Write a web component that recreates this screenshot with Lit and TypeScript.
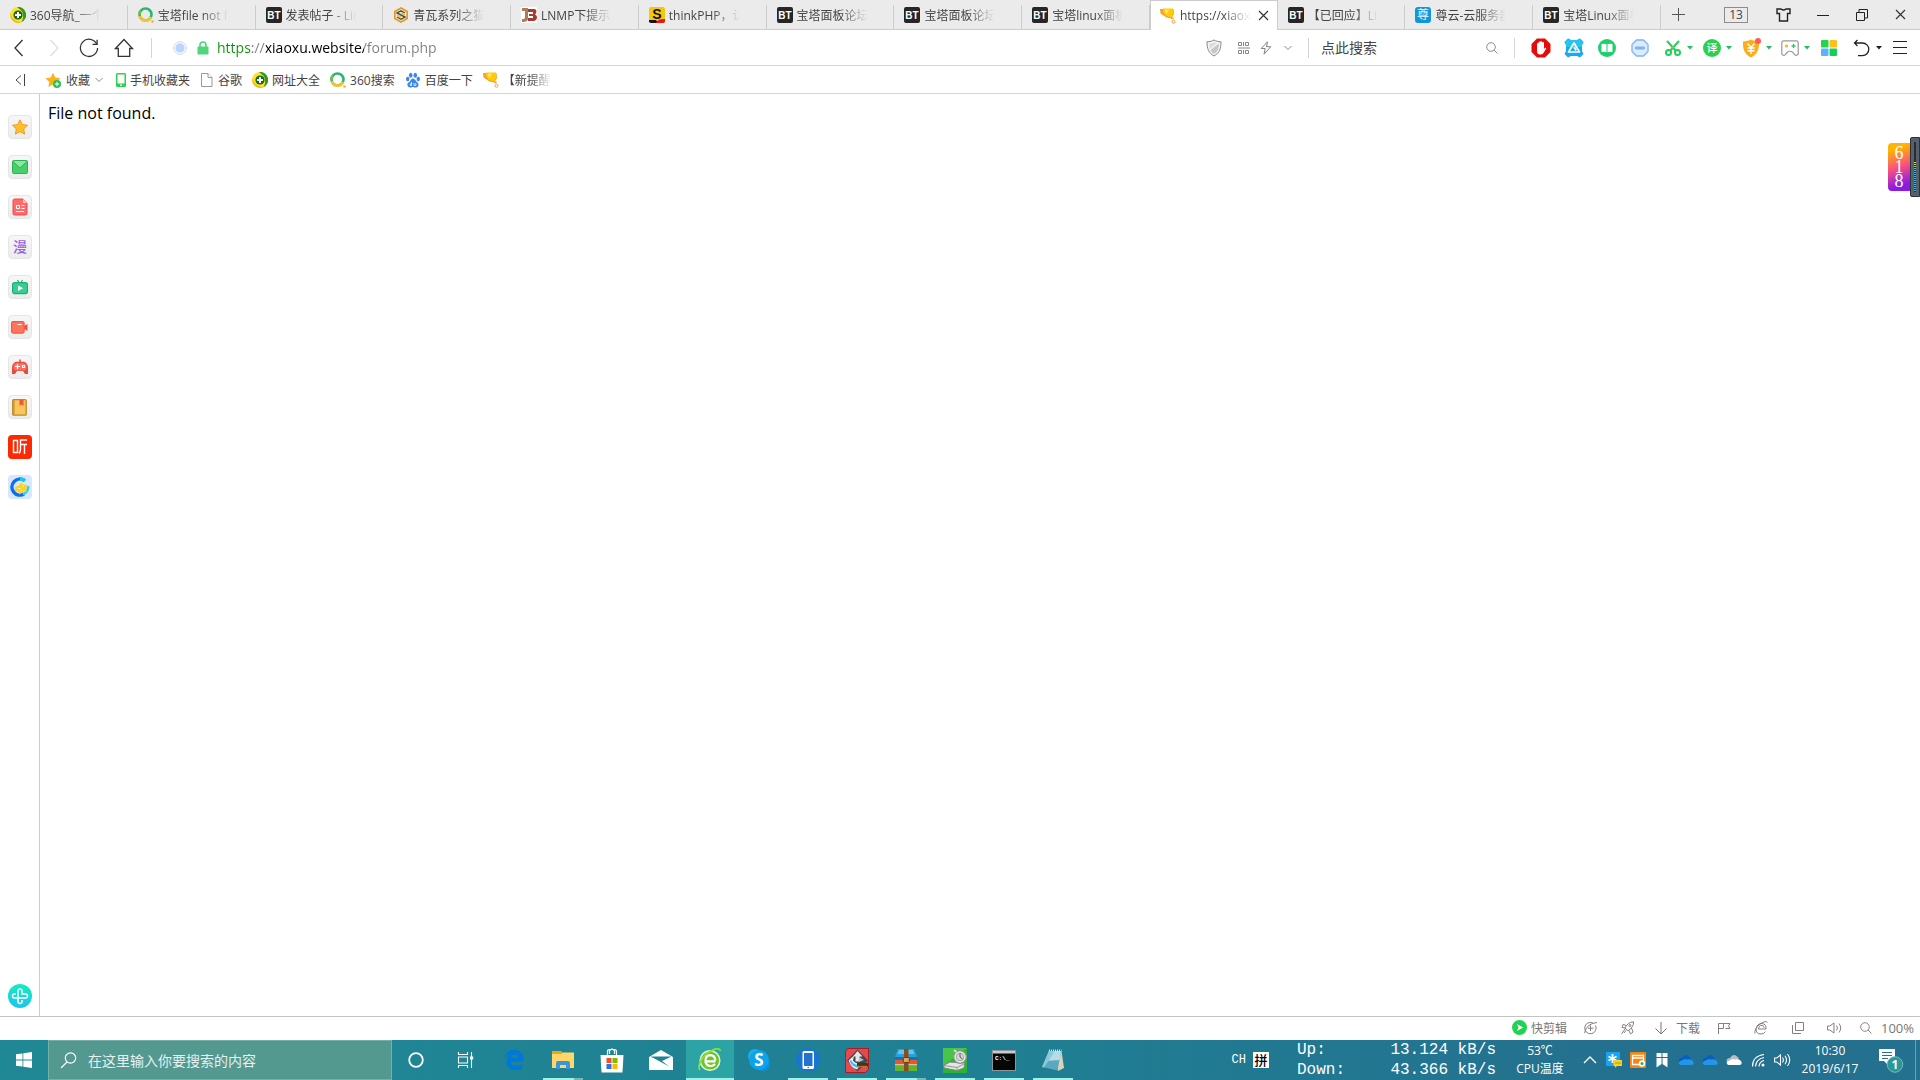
import { LitElement, html, css, TemplateResult } from "lit";
import { customElement } from "lit/decorators.js";
import { classMap } from "lit/directives/class-map.js";

type Icon = TemplateResult;

interface Item {
  label: string;
  icon: Icon;
  extra?: string;
}

/* ---------- site icons ---------- */

const nav360 = html`<svg width="16" height="16" viewBox="0 0 16 16">
  <circle cx="8" cy="8" r="8" fill="#ffe02e" />
  <path d="M7 0a8 8 0 0 1 4 15.400C14 12 14 5 10 2.500 9 1.500 8 .8 7 0z" fill="#2c9a2c" />
  <path d="M.5 6C1 11 5 14 11 15.400A8 8 0 0 1 .5 6z" fill="#f0b81c" />
  <circle cx="8" cy="8" r="4.600" fill="#146b18" />
  <path d="M8 5v6M5 8h6" stroke="#fff" stroke-width="2" />
</svg>`;

const search360 = html`<svg width="16" height="16" viewBox="0 0 16 16" fill="none">
  <circle cx="7.500" cy="7.500" r="6" stroke="#2bb673" stroke-width="2.600" />
  <path d="M1.700 9.200A6 6 0 0 0 13 10" stroke="#f7c52b" stroke-width="2.600" />
  <path d="M1.500 7.500A6 6 0 0 1 3 3.500" stroke="#6fc043" stroke-width="2.600" />
  <circle cx="14.500" cy="14.500" r="1.300" fill="#f7b32b" />
</svg>`;

const bt = html`<svg width="16" height="16" viewBox="0 0 16 16">
  <rect width="16" height="16" rx="2" fill="#262626" />
  <text x="8" y="12" text-anchor="middle" font-size="10" font-weight="700" fill="#fff" font-family="Liberation Sans, sans-serif">BT</text>
</svg>`;

const hexCoin = html`<svg width="16" height="16" viewBox="0 0 16 16" fill="none">
  <path d="M8 1l6.200 3.500v7L8 15l-6.200-3.500v-7z" stroke="#e8951c" stroke-width="1.600" />
  <path d="M12 6L8 3.800 4 6l8 4-4 2.300L4 10" stroke="#4f4c34" stroke-width="1.400" />
  <path d="M4 8l4 2M8 6l4 2" stroke="#e8b41c" stroke-width="1.200" />
</svg>`;

const jb = html`<svg width="16" height="16" viewBox="0 0 16 16">
  <rect width="16" height="16" fill="#fff" />
  <path d="M1 1h6v10c0 3-2 4-6 4v-3c2 0 3 0 3-2V4H1z" fill="#b07a60" />
  <path d="M7 2h6c3 0 3 4 1 5.500 3 1 2.500 6.500-1 6.500H7v-3h5V9H8V7h4V5H7z" fill="#a33b2f" />
</svg>`;

const thinkS = html`<svg width="16" height="16" viewBox="0 0 16 16">
  <rect width="16" height="16" rx="2" fill="#f8c70c" />
  <path d="M0 13h7l2 3H2a2 2 0 0 1-2-2z" fill="#111" />
  <path d="M7 16c2-4 5-4 9-4v2a2 2 0 0 1-2 2z" fill="#e3181b" />
  <text x="8" y="12" text-anchor="middle" font-size="14" font-weight="700" fill="#111" font-family="Liberation Sans, sans-serif">S</text>
</svg>`;

const trophy = html`<svg width="16" height="16" viewBox="0 0 16 16">
  <path d="M0 1h13.500l.5 5-2.500 4.500-5-1L.5 5.500z" fill="#f2a12c" />
  <path d="M3 .5h10l.3 5.500-2.300 3.500L6 8 3 4z" fill="#ffcb05" />
  <path d="M5 1.500h4L7 6 5 4z" fill="#ffe36a" />
  <path d="M10.500 10.500l3-1.500v2.500z" fill="#f2a12c" />
  <circle cx="13.500" cy="13.800" r="1.500" fill="#fff" stroke="#f0a040" />
</svg>`;

const zun = html`<svg width="16" height="16" viewBox="0 0 16 16">
  <rect width="16" height="16" rx="3" fill="#1296db" />
  <text x="8" y="12" text-anchor="middle" font-size="12" fill="#e8f6ff" font-family="Noto Sans CJK SC, sans-serif">尊</text>
</svg>`;

const TABS: Item[] = [
  { label: "360导航_一个", icon: nav360 },
  { label: "宝塔file not f", icon: search360 },
  { label: "发表帖子 - Lin", icon: bt },
  { label: "青瓦系列之猫", icon: hexCoin },
  { label: "LNMP下提示", icon: jb },
  { label: "thinkPHP，访", icon: thinkS },
  { label: "宝塔面板论坛", icon: bt },
  { label: "宝塔面板论坛", icon: bt },
  { label: "宝塔linux面板", icon: bt },
  { label: "https://xiaox", icon: trophy, extra: "active" },
  { label: "【已回应】Lin", icon: bt },
  { label: "尊云-云服务器", icon: zun },
  { label: "宝塔Linux面板", icon: bt },
];

/* ---------- small shared glyphs ---------- */

const cross = html`<svg width="11" height="11" viewBox="0 0 11 11"><path d="M1 1l9 9M10 1l-9 9" stroke="#333" stroke-width="1.200" /></svg>`;
const chevron = html`<svg width="8" height="6" viewBox="0 0 8 6" fill="none"><path d="M.5 1L4 4.500 7.500 1" stroke="#888" /></svg>`;
const caret = (c: string) => html`<svg width="6" height="4" viewBox="0 0 6 4"><path d="M0 0h6L3 3.500z" fill=${c} /></svg>`;
const magnifier = html`<svg width="12" height="12" viewBox="0 0 12 12" fill="none" stroke="#8a8a8a"><circle cx="5" cy="5" r="4.300" /><path d="M8 8l3.500 3.500" /></svg>`;

/* ---------- navigation ---------- */

const NAV: Item[] = [
  { label: "后退", icon: html`<svg width="12" height="20" viewBox="0 0 12 20" fill="none"><path d="M9.500 2L2 10l7.500 8" stroke="#333" stroke-width="1.300" /></svg>` },
  { label: "前进", icon: html`<svg width="12" height="20" viewBox="0 0 12 20" fill="none"><path d="M2.500 2L10 10l-7.500 8" stroke="#ddd" stroke-width="1.300" /></svg>` },
  { label: "刷新", icon: html`<svg width="20" height="20" viewBox="0 0 20 20" fill="none" stroke="#333" stroke-width="1.300"><path d="M17.800 6.200A8.600 8.600 0 1 0 18.600 10" /><path d="M13.500 6.300h4.600V1.800" /></svg>` },
  { label: "主页", icon: html`<svg width="20" height="20" viewBox="0 0 20 20" fill="none" stroke="#333" stroke-width="1.300"><path d="M1.500 10.500L10 1.500l8.500 9h-2.800v7.800H4.300v-7.800z" /></svg>` },
];

const siteDot = html`<svg width="14" height="14" viewBox="0 0 14 14"><circle cx="7" cy="7" r="6.300" fill="#fff" stroke="#c5d8fb" /><circle cx="7" cy="7" r="4.700" fill="#bcd3fd" /></svg>`;
const lock = html`<svg width="12" height="14" viewBox="0 0 12 14"><path d="M3 6V4a3 3 0 0 1 6 0v2" fill="none" stroke="#4fd67a" stroke-width="1.600" /><rect x=".5" y="5.500" width="11" height="8" rx="1" fill="#4fd67a" /></svg>`;

const shieldGrey = html`<svg width="16" height="18" viewBox="0 0 16 18"><path d="M8 1c2 1.200 4.500 1.800 7 1.800 0 7-1.500 11-7 14.200C2.500 13.800 1 9.800 1 2.800 3.500 2.800 6 2.200 8 1z" fill="#f6f6f6" stroke="#858585" /><path d="M13 4.500c0 5.500-1.500 8-5 10.500-2-1.300-3-2.500-3.700-4z" fill="#c6c6c6" /><path d="M3 4.500C5 4.400 6.500 4 8 3.200l3 1.100L3.800 10z" fill="#dcdcdc" /></svg>`;
const qr = html`<svg width="12" height="12" viewBox="0 0 12 12" fill="none" stroke="#888"><path d="M.5 .5h3v3h-3zM5.500 0v4M7.500 .5h3v3h-3zM0 6h12M.5 8.500h3v3h-3zM5.500 8v4M7.500 8.500h3v3h-3z" /></svg>`;
const bolt = html`<svg width="12" height="14" viewBox="0 0 12 14" fill="none"><path d="M7.500 .8L1.200 7.500h4L4 13.200l6.800-7.500H6.500z" stroke="#808080" /></svg>`;

const EXTS: Item[] = [
  { label: "广告拦截", icon: html`<svg width="20" height="20" viewBox="0 0 20 20"><path d="M6 .5h8L19.500 6v8L14 19.500H6L.5 14V6z" fill="#e30b0b" /><path d="M6 10V5.500q.8-1 1.600 0V4q.9-1 1.800 0v-.5q.9-1 1.800 0v1q.9-1 1.800 0V11l1.200-1.200q1.300-.3 1 .7L12.500 15q-1 1.500-3.500 1.500-3 0-3-3.500z" fill="#fff" /></svg>` },
  { label: "扩展", icon: html`<svg width="20" height="20" viewBox="0 0 20 20"><path d="M4 .5l3 1.500h6l3-1.500 3.500 3.500L18 7v6l1.500 3-3.500 3.500L13 18H7l-3 1.500L.5 16 2 13V7L.5 4z" fill="#1aa9f0" /><path d="M4 .5l3 1.500h6l3-1.500 3.500 3.500L18 7v2H2V7L.5 4z" fill="#25c3ee" /><path d="M10 5l5.500 9h-11zM10 9l2 3.500" fill="none" stroke="#fff" stroke-width="1.700" stroke-linejoin="round" /></svg>` },
  { label: "阅读", icon: html`<svg width="18" height="18" viewBox="0 0 18 18"><circle cx="9" cy="9" r="9" fill="#1fcf6e" /><path d="M3.500 5q3-.8 5 .2v8q-2-1-5-.2zM14.500 5q-3-.8-5 .2v8q2-1 5-.2z" fill="#fff" /></svg>` },
  { label: "停止", icon: html`<svg width="18" height="18" viewBox="0 0 18 18"><path d="M5.500 1h7L17 5.500v7L12.500 17h-7L1 12.500v-7z" fill="#dcebff" stroke="#7db3f5" stroke-width="1.300" /><rect x="4" y="7.500" width="10" height="3" rx="1" fill="#7db3f5" /></svg>` },
];

const EXTS_MENU: Item[] = [
  { label: "截图", icon: html`<svg width="18" height="18" viewBox="0 0 18 18" fill="none" stroke="#27cc5b" stroke-width="2"><path d="M3 2l9 10M15 2L6 12" /><circle cx="4.500" cy="13.500" r="2.500" /><circle cx="13.500" cy="13.500" r="2.500" /><circle cx="9" cy="8.500" r="1" fill="#f7a51c" stroke="none" /></svg>` },
  { label: "翻译", icon: html`<svg width="18" height="18" viewBox="0 0 18 18"><circle cx="9" cy="9" r="9" fill="#27d34d" /><text x="9" y="13" text-anchor="middle" font-size="11" font-weight="500" fill="#fff" font-family="Noto Sans CJK SC, sans-serif">译</text></svg>` },
  { label: "网购", icon: html`<svg width="19" height="20" viewBox="0 0 19 20"><path d="M9 1.500c2 1.200 4.500 1.800 8 2 .3 8-1.500 12.500-8 16-6.500-3.500-8.300-8-8-16 3.500-.2 6-.8 8-2z" fill="#fdae17" /><path d="M5.500 5.500L9 9.500l3.500-4M5.500 10h7M5.500 12.700h7M9 9.500V16" fill="none" stroke="#fff" stroke-width="1.400" /><circle cx="16" cy="3" r="3" fill="#ff5a5a" /></svg>` },
  { label: "游戏", icon: html`<svg width="18" height="16" viewBox="0 0 18 16"><path d="M2.500.8h13q1.700 0 1.700 2v11.400q-2 2-3.500.4L12 12.500Q9 10 6 12.500l-1.700 2.100q-1.500 1.600-3.500-.4V2.800q0-2 1.700-2z" fill="#fff" stroke="#999" stroke-width="1.200" /><circle cx="5.500" cy="6" r="1.600" fill="#f7b21c" /><path d="M12.500 4v4M10.500 6h4" stroke="#27cc5b" stroke-width="1.300" /></svg>` },
];

const squares = html`<svg width="16" height="16" viewBox="0 0 16 16"><rect width="7.500" height="7.500" rx="1" fill="#27d34d" /><rect x="8.500" width="7.500" height="7.500" rx="1" fill="#fcc21b" /><rect y="8.500" width="7.500" height="7.500" rx="1" fill="#55b5f8" /><rect x="8.500" y="8.500" width="7.500" height="7.500" rx="1" fill="#12cf55" /></svg>`;
const undo = html`<svg width="18" height="18" viewBox="0 0 18 18" fill="none" stroke="#222" stroke-width="1.300"><path d="M4.500 1L1.500 4l3 3M1.500 4h8a6.300 6.300 0 0 1 0 12.600H5" /></svg>`;
const menu = html`<svg width="14" height="14" viewBox="0 0 14 14"><path d="M0 .5h14M0 6.500h14M0 12.500h14" stroke="#222" /></svg>`;

/* ---------- bookmarks ---------- */

const starPath = "M8 .8l2.300 4.800 5.200.7-3.800 3.600.9 5.200L8 12.600l-4.600 2.500.9-5.200L.5 6.300l5.200-.7z";
const BOOKMARKS: Item[] = [
  { label: "手机收藏夹", icon: html`<svg width="10" height="14" viewBox="0 0 10 14"><rect width="10" height="14" rx="1.500" fill="#2fcf52" /><rect x="1.500" y="1.500" width="7" height="9" fill="#fff" /><rect x="4" y="11.500" width="2" height="1.500" fill="#fff" /></svg>` },
  { label: "谷歌", icon: html`<svg width="14" height="14" viewBox="0 0 14 14" fill="#fff" stroke="#999"><path d="M1.500 .5H8L12 4.500v9H1.500z" /><path d="M8 .5v4h4" /></svg>` },
  { label: "网址大全", icon: nav360 },
  { label: "360搜索", icon: search360 },
  { label: "百度一下", icon: html`<svg width="16" height="16" viewBox="0 0 16 16" fill="#3b86ee"><ellipse cx="5.700" cy="3.200" rx="1.800" ry="2.500" /><ellipse cx="10.300" cy="3.200" rx="1.800" ry="2.500" /><ellipse cx="2.700" cy="7" rx="1.700" ry="2.200" /><ellipse cx="13.300" cy="7" rx="1.700" ry="2.200" /><path d="M8 6.500c2 0 2.500 2.500 4.500 4s1 5-1.500 5-2-.5-3-.5-1 .5-3 .5-4-3.500-1.500-5S6 6.500 8 6.500z" /><path d="M6.500 10v3.500H5.300v-1.700h1M9 11v2.500h1.800V11" fill="none" stroke="#fff" stroke-width=".8" /></svg>` },
  { label: "【新提醒", icon: trophy, extra: "fade" },
];

/* ---------- side panel ---------- */

const SIDE: Item[] = [
  { label: "收藏", icon: html`<svg width="16" height="16" viewBox="0 0 16 16"><path d=${starPath} fill="#fdc02c" stroke="#f39a1f" /></svg>` },
  { label: "邮箱", icon: html`<svg width="16" height="14" viewBox="0 0 16 14"><rect x=".5" y=".5" width="15" height="13" rx="1" fill="#47cf6a" stroke="#2eb157" /><path d="M.8 1h14.400L8 8z" fill="#8be79a" /><path d="M1 1.500l7 6.700 7-6.700" fill="none" stroke="#2eb157" /></svg>` },
  { label: "新闻", icon: html`<svg width="16" height="18" viewBox="0 0 16 18"><path d="M2.500 1h8.500L15 5v10.500q0 1.500-1.500 1.500h-11Q1 17 1 15.500v-13Q1 1 2.500 1z" fill="#ff6b6b" stroke="#e64c4c" /><path d="M11 1l4 4h-4z" fill="#ffc9c9" /><path d="M4.500 7.500h3v3h-3zM9.500 7.500h3M9.500 10.500h3M4 13.500h8" fill="none" stroke="#fff" /></svg>` },
  { label: "漫画", icon: html`<svg width="18" height="18" viewBox="0 0 18 18"><text x="9" y="14" text-anchor="middle" font-size="14" font-weight="500" fill="#9463e4" font-family="Noto Sans CJK SC, sans-serif">漫</text></svg>` },
  { label: "电视", icon: html`<svg width="16" height="16" viewBox="0 0 16 16"><path d="M5.500 1l1.800 3M10.500 1L8.700 4" stroke="#1fae78" stroke-width="1.200" /><rect x=".6" y="3.600" width="14.800" height="11" rx="2" fill="#36ce94" stroke="#1fae78" stroke-width="1.200" /><path d="M6 6.500v5.500l5-2.700z" fill="#fff" /></svg>` },
  { label: "视频", icon: html`<svg width="17" height="13" viewBox="0 0 17 13"><path d="M13 5l3.500-2v7L13 8z" fill="#e8553f" /><rect x=".6" y=".6" width="12.500" height="11.500" rx="1.500" fill="#ff765c" stroke="#f25a42" stroke-width="1.200" /><path d="M6.500 3.500h4" stroke="#fff" /></svg>` },
  { label: "游戏", icon: html`<svg width="16" height="16" viewBox="0 0 16 16"><path d="M8 .5v3" stroke="#e04c3e" stroke-width="1.500" /><path d="M4 2.800h8Q16 4 16 9v6h-3l-2-3H5l-2 3H0V9q0-5 4-6.200z" fill="#e04c3e" /><rect x="1.500" y="4" width="13" height="7.500" rx="3" fill="#fb6e5d" /><path d="M3 7.500h5M5.500 5v5M10.500 6.500h2v2h-2z" fill="none" stroke="#fff" stroke-width="1.200" /></svg>` },
  { label: "小说", icon: html`<svg width="15" height="17" viewBox="0 0 15 17"><rect x=".7" y=".7" width="13.500" height="15.500" rx="1" fill="#fbc55a" stroke="#b98a2c" stroke-width="1.300" /><path d="M2 1v15" stroke="#b98a2c" /><path d="M7.500 1h4v6l-2-1.700-2 1.700z" fill="#f0543a" /></svg>` },
  { label: "听书", extra: "red", icon: html`<svg width="24" height="24" viewBox="0 0 24 24"><path d="M5.500 5.500h4v12h-4zM19 5h-6.500v9q0 3-1.500 4.500M12.500 9.500H19M16.500 9.500V19" fill="none" stroke="#fff" stroke-width="1.400" /></svg>` },
  { label: "游戏中心", extra: "blue", icon: html`<svg width="20" height="20" viewBox="0 0 20 20"><path d="M14.500 3.500A8 8 0 1 0 14 17" fill="none" stroke="#0f6df2" stroke-width="3.500" /><path d="M10 2q3 0 5 2" fill="none" stroke="#18c8f0" stroke-width="3.500" /><path d="M18 9A8 8 0 0 1 13 17.300" fill="none" stroke="#35cfe0" stroke-width="2.500" /><path d="M5 10l4-1.500 1.500-3 3 2 4 .5-1.500 3 .5 3.500-4 .5-3 2.500-1.500-3-3-1z" fill="#ffd21c" /><path d="M8 11.500h2.500M12.500 9H14M11 13.500h1.500" stroke="#fff6b8" stroke-width="1.200" /></svg>` },
];

/* ---------- status bar ---------- */

const STATUS_A: Item[] = [
  { label: "加速", icon: html`<svg width="16" height="14" viewBox="0 0 16 14" fill="none" stroke="#808080"><path d="M12.500 4.500A5.700 5.700 0 1 1 10 2M1.500 12Q3.500 2.500 14 1.500M7.500 4.500v5.500M5 7.200h5.500" /></svg>` },
  { label: "火箭", icon: html`<svg width="16" height="14" viewBox="0 0 16 14" fill="none" stroke="#808080"><path d="M13.500.8q.5 5-5.500 9L5 7Q8 1 13.500.8zM6.500 4.500L3 3.500l-1 3 3 .5M9 9.500l1.500 3.500 2.500-2-1.500-4M5 8l-3.500 5M6 9.500L4 12" /><circle cx="10" cy="4.500" r="1" /></svg>` },
];
const STATUS_B: Item[] = [
  { label: "标记", icon: html`<svg width="14" height="12" viewBox="0 0 14 12" fill="none" stroke="#808080"><path d="M1.500 12V1.500h5v5h-5M6.500 1.500h6.500L11.500 4 13 6.500H8.500" /></svg>` },
  { label: "兼容模式", icon: html`<svg width="14" height="14" viewBox="0 0 14 14" fill="none" stroke="#808080"><path d="M12 8H4.500q.5-4 3.500-3.500 2 .2 2 2.200M12 8Q12.500 3 8 2.500 3 2.500 2 8q0 5 5 5 3 0 4.500-2.500M1 12.500Q0 8 6 3q6-4 7.500-1.500" /></svg>` },
  { label: "窗口", icon: html`<svg width="14" height="12" viewBox="0 0 14 12" fill="none" stroke="#808080"><path d="M4.500.5h8v8h-8zM1.500 3v8.500H10" /></svg>` },
  { label: "声音", icon: html`<svg width="16" height="12" viewBox="0 0 16 12" fill="none" stroke="#808080"><path d="M.5 4v4h2.300L7 11V1L2.800 4zM9.500 3.500q2 2.500 0 5M12 1.500q3.500 4.500 0 9" /></svg>` },
];

/* ---------- taskbar ---------- */

const APPS: Item[] = [
  { label: "Cortana", icon: html`<svg width="16" height="16" viewBox="0 0 16 16"><circle cx="8" cy="8" r="6.800" fill="none" stroke="#fff" stroke-width="1.800" /></svg>` },
  { label: "任务视图", icon: html`<svg width="17" height="16" viewBox="0 0 17 16" fill="none" stroke="#fff" stroke-width="1.100"><path d="M1.500 0v2.500h9V0M1.500 5h9v6h-9zM1.500 16v-2.500h9V16M14.500 0v16" /><path d="M13 4.500h3.200v3H13z" fill="#fff" stroke="none" /></svg>` },
  { label: "Edge", icon: html`<svg width="22" height="22" viewBox="0 0 22 22"><path d="M1.200 10.200C2 4.500 6 .8 11.300.8c5.800 0 9.200 4 9.200 9.200v2.500H7.800c.2 3 2.700 4.300 5.700 4.300 2.100 0 4-.5 5.700-1.600v4.200c-2 1.200-4.200 1.600-6.700 1.600-5.500 0-9.200-3.200-9.200-8.300 0-3.500 2-6 4.900-7.400C4.700 6 2.500 7.900 1.200 10.200zM7.900 8.900h7.300c0-2.200-1.200-3.500-3.500-3.500-2.100 0-3.400 1.300-3.800 3.500z" fill="#0078d7" /></svg>` },
  { label: "文件资源管理器", extra: "open multi", icon: html`<svg width="22" height="20" viewBox="0 0 22 20"><path d="M0 1h9l2 2h10.500v15H0z" fill="#e8a80f" /><path d="M0 4h9l2-1.500h11V18H0z" fill="#ffd768" /><path d="M4 19v-6q0-2 2-2h10q2 0 2 2v6h-4v-4H8v4z" fill="#3a95dd" /></svg>` },
  { label: "应用商店", icon: html`<svg width="24" height="25" viewBox="0 0 24 25"><path d="M7.500 7V3.500q0-2 2-2h5q2 0 2 2V7M9.500 6V2.500L12 1l2.500 1.500V6" fill="none" stroke="#fff" stroke-width="1.200" /><path d="M.5 7h23l-1 17.500H1.500z" fill="#fff" /><rect x="6.500" y="10" width="5" height="5" fill="#f25022" /><rect x="12.500" y="10" width="5" height="5" fill="#7fba00" /><rect x="6.500" y="16" width="5" height="5" fill="#2e6ff2" /><rect x="12.500" y="16" width="5" height="5" fill="#ffb900" /></svg>` },
  { label: "邮件", icon: html`<svg width="24" height="20" viewBox="0 0 24 20"><path d="M0 7L12 0l12 7v13H0z" fill="#fff" /><path d="M1.500 6.500h21L13 11l7 5.500L10 11z" fill="#1f8393" /></svg>` },
  { label: "360安全浏览器", extra: "open current", icon: html`<svg width="24" height="24" viewBox="0 0 24 24"><circle cx="12" cy="12.500" r="9.800" fill="#6cc62a" stroke="#e9f7d8" stroke-width="1.500" /><path d="M17.500 13.300H7.500q-.3-6 4.800-6.200 4.500 0 5 5.200M7.500 13.500q.8 4.500 5 4.500 2.700 0 4.500-2" fill="none" stroke="#fff" stroke-width="2.200" /><path d="M2 22C-1 18 4 8 12 3.500 17 0 22 0 22.500 3" fill="none" stroke="#8ddc3c" stroke-width="1.800" /></svg>` },
  { label: "Skype", icon: html`<svg width="24" height="24" viewBox="0 0 24 24"><circle cx="8" cy="8" r="7" fill="#17b1f3" /><circle cx="16" cy="16" r="7" fill="#0a8fe0" /><circle cx="12" cy="12" r="10" fill="#0da2ea" /><text x="12" y="18" text-anchor="middle" font-size="17" font-weight="700" fill="#fff" font-family="Open Sans, sans-serif">S</text></svg>` },
  { label: "手机助手", extra: "open", icon: html`<svg width="24" height="24" viewBox="0 0 24 24"><circle cx="12" cy="12" r="12" fill="#1876d2" /><rect x="6.500" y="3" width="11.500" height="18" rx="1.500" fill="#fff" /><rect x="8" y="5" width="8.500" height="13" fill="#2372cf" /><circle cx="12.200" cy="19.500" r=".8" fill="#1876d2" /></svg>` },
  { label: "远程工具", extra: "open", icon: html`<svg width="24" height="25" viewBox="0 0 24 25"><path d="M2.500.5h21v21l-3 3H.5v-21z" fill="#e5484d" stroke="#a81c24" /><path d="M12.500 1.500L23 12.500l-10.500 11L2 12.500z" fill="#43464b" /><path d="M12.500 3l5 5.500h-3v5h-4v-5H8z" fill="#e3e7ea" /><path d="M3.500 12.500L9 7.500l-1 5q2 3 6 3l-1.500 6q-6-1-9-9z" fill="#dff1fa" /><path d="M6 12q2 5 8 5v3q-7-1-9.500-7z" fill="#4cb6e6" /><path d="M14 9l5 3-5 2z" fill="#b9bec3" /><rect x="12" y="15" width="11" height="3.500" fill="#4a3312" /><path d="M12.500 18.500h10" stroke="#e3a93b" stroke-width="1.500" stroke-dasharray="1 1" /></svg>` },
  { label: "压缩软件", extra: "open multi", icon: html`<svg width="24" height="24" viewBox="0 0 24 24"><path d="M4 1h16l3.500 9H.5z" fill="#2a9fe0" /><path d="M5 2h14l1.500 4h-17z" fill="#63c4f1" /><path d="M.5 9h23v2.500H.5z" fill="#1173b3" /><rect x="1" y="12" width="22" height="4.500" fill="#e4572f" /><rect x="1" y="17.500" width="22" height="5.500" fill="#5fb62c" /><path d="M1 16.800h22" stroke="#f3e6c8" /><path d="M10 1h4.500v22H10z" fill="#8b4a20" /><rect x="9.300" y="9.500" width="6" height="5" rx="1" fill="#d6ac5b" stroke="#6a3814" /></svg>` },
  { label: "磁盘工具", extra: "open", icon: html`<svg width="24" height="25" viewBox="0 0 24 25"><rect width="24" height="25" fill="#24b82a" /><path d="M0 0h24L0 18z" fill="#49c44b" /><path d="M1 17l6-3 15 1-1 5-7 2.500L1 20z" fill="#e2e5e2" stroke="#7c857e" /><path d="M1 17.500l13 2v3M14 19.500l8-4" stroke="#8f9891" fill="none" /><circle cx="17" cy="9" r="6.300" fill="#e6eae7" stroke="#8a938c" stroke-width="1.200" /><circle cx="17" cy="9" r="3.800" fill="#cfd5d0" stroke="#a3aaa5" /><path d="M17 5v4l2.500 2" stroke="#5b625d" fill="none" /><path d="M11 2l2.500 2" stroke="#d8dcd8" stroke-width="2" /></svg>` },
  { label: "命令提示符", extra: "open", icon: html`<svg width="24" height="21" viewBox="0 0 24 21"><rect x=".5" y=".5" width="23" height="20" fill="#060606" stroke="#8e959b" /><rect x="1" y="1" width="22" height="2.500" fill="#c6ccd0" /><text x="3" y="10" font-size="6" font-weight="700" fill="#fff" font-family="Liberation Mono, monospace">C:\\_</text></svg>` },
  { label: "记事本", extra: "open", icon: html`<svg width="24" height="24" viewBox="0 0 24 24"><path d="M15 3h5.500l2.500 17-6 3z" fill="#d9d2b8" /><path d="M8 3h12l-3.500 19.500L1 19z" fill="#5ba9c0" /><path d="M8 3h12l-1.500 9L4 13z" fill="#b5dce8" /><path d="M8 3h6L3 19.400 1 19z" fill="#8fc6d8" /><path d="M8 2.500h12.500" stroke="#dfe6e8" stroke-width="2" stroke-dasharray="1 1" /></svg>` },
];

const cloud = (a: string, b: string) => html`<svg width="16" height="12" viewBox="0 0 16 12"><path d="M1 9q-1.500-5 3-5 3-5 7-1.500 2 1 2 3L7 8z" fill=${a} /><path d="M2.500 11Q0 10.500 1 8q1-1.500 3-1.500Q6 4 9 5.500q5-.8 6.500 2.500.8 3-2 3z" fill=${b} /></svg>`;

const TRAY: Item[] = [
  { label: "显示隐藏的图标", icon: html`<svg width="14" height="8" viewBox="0 0 14 8" fill="none"><path d="M1 7l6-6 6 6" stroke="#fff" stroke-width="1.400" /></svg>` },
  { label: "聊天", icon: html`<svg width="16" height="16" viewBox="0 0 16 16"><rect width="14" height="14" rx="1" fill="#18a4f4" /><path d="M6.500 2v9M2.500 4.500l8 4M10.500 4.500l-8 4" stroke="#fff" stroke-width="1.800" /><path d="M7.500 8H16v6h-5l-2 2v-2H7.500z" fill="#fcd21e" /><path d="M9.500 11h5" stroke="#7a5c00" stroke-dasharray="1 1" /></svg>` },
  { label: "窗口工具", icon: html`<svg width="16" height="16" viewBox="0 0 16 16"><rect width="16" height="16" rx="1" fill="#fa8311" /><path d="M2.500 3.500h11v9h-11zM2.500 6h11" fill="none" stroke="#fff" stroke-width="1.300" /><circle cx="12" cy="11.500" r="3.200" fill="#fff" /><circle cx="12" cy="11.500" r="1.500" fill="#2bb545" /></svg>` },
  { label: "安全", icon: html`<svg width="12" height="16" viewBox="0 0 12 16"><path d="M.5 1h5v4h-5zM6.500 1h5v4h-5zM.5 6h5v6L.5 15.500zM6.500 6h5v9.500l-5-3.500z" fill="#fff" /></svg>` },
  { label: "OneDrive", icon: cloud("#0a5cc0", "#2496e8") },
  { label: "OneDrive", icon: cloud("#0a5cc0", "#2496e8") },
  { label: "OneDrive", icon: cloud("#b5bdc4", "#ffffff") },
  { label: "网络", icon: html`<svg width="15" height="14" viewBox="0 0 15 14" fill="none" stroke="#fff" stroke-width="1.200"><path d="M1.500 13.500Q1.500 3 13 1.500M4.500 13.500Q5 6 13 4.500M8 13.500q.5-5 5-6" /><circle cx="12" cy="12" r="1.500" fill="#fff" stroke="none" /></svg>` },
  { label: "音量", icon: html`<svg width="17" height="14" viewBox="0 0 17 14" fill="none" stroke="#fff" stroke-width="1.100"><path d="M.6 5v4h2.200L6.500 12V2L2.800 5zM8.500 4.500q1.800 2.500 0 5M11 2.800q3 4.200 0 8.400M13.500 1q4.500 6 0 12" /></svg>` },
];

@customElement("app-root")
export class AppRoot extends LitElement {
  static styles = css`
    :host {
      display: block;
      font-family: "Open Sans", "Noto Sans CJK SC", sans-serif;
      font-size: 12px;
      color: #444;
    }
    * {
      box-sizing: border-box;
    }
    button,
    input {
      font: inherit;
      color: inherit;
      background: none;
      border: 0;
      padding: 0;
      margin: 0;
      outline: 0;
    }
    button,
    a {
      display: flex;
      align-items: center;
      justify-content: center;
      white-space: nowrap;
    }
    a {
      color: inherit;
      text-decoration: none;
    }
    svg {
      display: block;
      flex: none;
    }
    .screen {
      display: flex;
      flex-direction: column;
      min-height: 100vh;
      background: #fff;
    }

    .titlebar {
      display: flex;
      height: 30px;
      background: #ebebeb;
      border-bottom: 1px solid #ccc;
    }
    .tabs {
      flex: 1;
      min-width: 0;
      display: grid;
      grid-template-columns: repeat(13, minmax(0, 1fr));
    }
    .tab {
      display: flex;
      align-items: center;
      min-width: 0;
      padding: 0 9px 0 10px;
      background: linear-gradient(#ccc, #ccc) right bottom / 1px 25px no-repeat;
    }
    .tab.active {
      height: 30px;
      padding-left: 9px;
      padding-right: 8px;
      background: #fff;
      border: 1px solid #ccc;
      border-bottom: 0;
    }
    .tab-main {
      flex: 1;
      min-width: 0;
      justify-content: flex-start;
      gap: 4px;
    }
    .tab-text {
      width: 72px;
      overflow: hidden;
      text-align: left;
      mask-image: linear-gradient(to right, #000 60%, transparent 98%);
    }
    .window-tools {
      display: flex;
      align-items: center;
    }
    .window-tools button {
      width: 39px;
      height: 29px;
    }
    .window-tools .new-tab {
      width: 34px;
    }
    .window-tools .count {
      width: 24px;
      height: 16px;
      margin: 0 16px 0 29px;
      border: 1px solid #8c8c8c;
      line-height: 14px;
    }

    .address {
      display: flex;
      align-items: center;
      height: 36px;
      padding: 0 4px 0 1px;
      border-bottom: 1px solid #d5d5d5;
    }
    .address button {
      height: 32px;
    }
    .nav {
      width: 35px;
    }
    .rule {
      width: 1px;
      height: 20px;
      background: #d5d5d5;
    }
    .rule.after-nav {
      margin: 0 21px 0 10px;
    }
    .site {
      display: flex;
      align-items: center;
      gap: 10px;
    }
    .url {
      flex: 1;
      min-width: 0;
      height: 32px;
      margin-left: 8px;
      font-size: 14px;
      color: #808080;
      -webkit-text-fill-color: transparent;
      background: linear-gradient(to right, #0a910a 35px, #808080 35px 49px, #000 49px 147px, #808080 147px);
      background-clip: text;
      -webkit-background-clip: text;
    }
    .w32 {
      width: 32px;
    }
    .w28 {
      width: 28px;
    }
    .w16 {
      width: 16px;
    }
    .search {
      display: flex;
      align-items: center;
      width: 207px;
      margin-left: 6px;
    }
    .search input {
      flex: 1;
      min-width: 0;
      padding-left: 12px;
      font-size: 14px;
    }
    .search input::placeholder {
      color: #444;
      opacity: 1;
    }
    .search button {
      width: 44px;
    }
    .exts {
      display: flex;
      margin-left: 9px;
    }
    .ext {
      width: 33px;
    }
    .ext-menu {
      width: 39px;
      justify-content: flex-start;
      padding-left: 8px;
      gap: 5px;
    }

    .bookmarks {
      display: flex;
      align-items: center;
      gap: 10px;
      height: 28px;
      padding-left: 14px;
      border-bottom: 1px solid #d5d5d5;
    }
    .bookmarks .collapse {
      width: 12px;
      margin-right: 9px;
    }
    .bookmark {
      gap: 4px;
    }
    .fav {
      gap: 5px;
      padding-right: 3px;
    }
    .fade {
      width: 68px;
      overflow: hidden;
      justify-content: flex-start;
      mask-image: linear-gradient(to right, #000 70%, transparent 100%);
    }

    .body {
      flex: 1;
      display: flex;
    }
    .side {
      display: flex;
      flex-direction: column;
      align-items: center;
      gap: 16px;
      width: 40px;
      padding: 21px 0 8px;
      border-right: 1px solid #ccc;
    }
    .side button {
      width: 24px;
      height: 24px;
      border: 1px solid #e6e6e6;
      border-radius: 4px;
      background: linear-gradient(#f7f7f7, #ececec);
    }
    .side .red {
      border: 0;
      background: #fb2a05;
    }
    .side .blue {
      border: 0;
      background: #d7e8fb;
    }
    .side .assistant {
      margin-top: auto;
      border: 0;
      border-radius: 50%;
      background: linear-gradient(#14edbe, #1cc4ee);
    }
    .page {
      flex: 1;
      position: relative;
      padding: 8px;
      font-size: 16px;
      line-height: 22px;
      color: #000;
    }
    .page p {
      margin: 0;
    }
    .promo {
      position: absolute;
      top: 43px;
      right: 0;
      display: flex;
      align-items: center;
    }
    .promo a {
      flex-direction: column;
      width: 22px;
      height: 48px;
      border-radius: 4px 0 0 4px;
      background: linear-gradient(160deg, #ffb400 15%, #fb4f80 50%, #8a1be0 85%);
      color: #fff;
      font: 18px/14px "Liberation Serif", serif;
    }
    .meter {
      width: 10px;
      height: 60px;
      padding: 4px 3px;
      border: 1px solid #2d3238;
      border-radius: 2px 0 0 2px;
      background: #56606a;
    }
    .meter-bar {
      height: 100%;
      background: repeating-linear-gradient(transparent 0 1px, #20242a 1px 2px),
        linear-gradient(#30353b 38%, #d9d66a 38% 44%, #7fd28c 50%, #45b8dc 58%);
    }

    .status {
      display: flex;
      align-items: center;
      justify-content: flex-end;
      gap: 6px;
      height: 24px;
      padding: 0 6px 2px 0;
      border-top: 1px solid #c3c3c3;
      color: #777;
    }
    .status-group {
      display: flex;
    }
    .status-group button {
      width: 37px;
      height: 22px;
    }
    .clip {
      gap: 4px;
    }
    .download {
      gap: 8px;
      padding-left: 1px;
    }
    .zoom {
      gap: 9px;
    }
    .zoom span {
      font-size: 13px;
    }

    .taskbar {
      display: flex;
      height: 40px;
      background: linear-gradient(to right, #208894, #1f8093 50%, #24708f 85%, #24708f);
      color: #fff;
    }
    .start {
      width: 48px;
    }
    .task-search {
      display: flex;
      align-items: center;
      gap: 11px;
      width: 344px;
      padding-left: 11px;
      border: 1px solid #76b0ab;
      background: #539990;
    }
    .task-search input {
      flex: 1;
      min-width: 0;
      font-size: 14px;
    }
    .task-search input::placeholder {
      color: #e6f1ef;
      opacity: 1;
    }
    .apps {
      display: flex;
      gap: 1px;
      flex: 1;
    }
    .app {
      width: 48px;
      height: 40px;
    }
    .open {
      background: linear-gradient(#9df3ea, #9df3ea) center bottom / 40px 2px no-repeat;
    }
    .multi {
      background: linear-gradient(to right, #9df3ea 78%, #75b9b5 78%) center bottom / 40px 2px no-repeat;
    }
    .current {
      background: linear-gradient(#9df3ea, #9df3ea) center bottom / 48px 2px no-repeat, #2ca3a5;
    }
    .lang {
      display: flex;
      align-items: center;
      gap: 7px;
      padding-right: 22px;
      font-family: "Liberation Mono", monospace;
    }
    .ime {
      width: 16px;
      height: 16px;
      background: #fff;
      color: #000;
      font: 500 13px/16px "Noto Sans CJK SC", sans-serif;
    }
    .speed {
      display: grid;
      grid-template-columns: 86px auto;
      align-content: center;
      width: 211px;
      padding: 0 6px;
      font: 16px/20px "Liberation Mono", monospace;
      margin: 0;
    }
    .speed dt {
      margin: 0;
    }
    .speed dd {
      margin: 0;
      text-align: right;
    }
    .cpu,
    .clock {
      display: flex;
      flex-direction: column;
      align-items: center;
      justify-content: center;
      line-height: 18px;
    }
    .cpu {
      width: 76px;
    }
    .clock {
      width: 72px;
    }
    .tray {
      display: flex;
    }
    .tray button {
      width: 24px;
    }
    .notice {
      width: 49px;
    }
    .peek {
      width: 5px;
      border-left: 1px solid #6ba1b5;
    }
  `;

  render() {
    return html`
      <div class="screen">
        ${this.titlebar()} ${this.address()} ${this.bookmarks()}
        <div class="body">
          <nav class="side" aria-label="侧边栏">
            ${SIDE.map(
              (s) => html`<button class=${s.extra ?? ""} aria-label=${s.label}>${s.icon}</button>`
            )}
            <button class="assistant" aria-label="助手">
              <svg width="18" height="18" viewBox="0 0 18 18" fill="none" stroke="#fff" stroke-width="1.500">
                <path d="M7 11V4a2 2 0 0 1 4 0v3h3.500a2 2 0 0 1 0 4H3.500a2 2 0 0 1 0-4H5M11 13v1.500a2 2 0 0 1-4 0V11" />
              </svg>
            </button>
          </nav>
          <main class="page">
            <p>File not found.</p>
            <aside class="promo">
              <a href="#promo" aria-label="618"><span>6</span><span>1</span><span>8</span></a>
              <div class="meter"><div class="meter-bar"></div></div>
            </aside>
          </main>
        </div>
        ${this.status()} ${this.taskbar()}
      </div>
    `;
  }

  private titlebar() {
    return html`<header class="titlebar">
      <div class="tabs">
        ${TABS.map((t) => {
          const active = t.extra === "active";
          return html`<div class=${classMap({ tab: true, active })}>
            <button class="tab-main">${t.icon}<span class="tab-text">${t.label}</span></button>
            ${active ? html`<button aria-label="关闭标签">${cross}</button>` : ""}
          </div>`;
        })}
      </div>
      <div class="window-tools">
        <button class="new-tab" aria-label="新建标签"><svg width="13" height="13" viewBox="0 0 13 13"><path d="M6.500 0v13M0 6.500h13" stroke="#555" /></svg></button>
        <button class="count">13</button>
        <button aria-label="皮肤"><svg width="15" height="14" viewBox="0 0 15 14" fill="none"><path d="M1 1h4q2.500 2 5 0h4v4.500h-2.500V13h-8V5.500H1z" stroke="#222" stroke-width="1.400" /></svg></button>
        <button aria-label="最小化"><svg width="12" height="2" viewBox="0 0 12 2"><path d="M0 1.500h12" stroke="#222" /></svg></button>
        <button aria-label="还原"><svg width="12" height="12" viewBox="0 0 12 12" fill="none" stroke="#222"><path d="M.5 3.500h8v8h-8zM3 3.500v-3h8.500V9h-3" /></svg></button>
        <button aria-label="关闭">${cross}</button>
      </div>
    </header>`;
  }

  private address() {
    return html`<div class="address">
      ${NAV.map((n) => html`<button class="nav" aria-label=${n.label}>${n.icon}</button>`)}
      <div class="rule after-nav"></div>
      <div class="site">${siteDot}${lock}</div>
      <input class="url" type="text" aria-label="地址" value="https://xiaoxu.website/forum.php" />
      <button class="w32" aria-label="安全">${shieldGrey}</button>
      <button class="w28" aria-label="二维码">${qr}</button>
      <button class="w16" aria-label="极速模式">${bolt}</button>
      <button class="w28" aria-label="更多">${chevron}</button>
      <form class="search">
        <div class="rule"></div>
        <input type="text" aria-label="搜索" placeholder="点此搜索" />
        <button type="button" aria-label="搜索">${magnifier}</button>
        <div class="rule"></div>
      </form>
      <div class="exts">
        ${EXTS.map((e) => html`<button class="ext" aria-label=${e.label}>${e.icon}</button>`)}
        ${EXTS_MENU.map(
          (e) => html`<button class="ext-menu" aria-label=${e.label}>${e.icon}${caret("#1fc25a")}</button>`
        )}
        <button class="ext" aria-label="扩展管理">${squares}</button>
        <button class="ext-menu" aria-label="恢复">${undo}${caret("#222")}</button>
        <button class="w32" aria-label="菜单">${menu}</button>
      </div>
    </div>`;
  }

  private bookmarks() {
    return html`<nav class="bookmarks" aria-label="收藏栏">
      <button class="collapse" aria-label="收起"><svg width="10" height="12" viewBox="0 0 10 12" fill="none"><path d="M6 1.500L1 6l5 4.500M9.500 0v12" stroke="#444" /></svg></button>
      <button class="fav">
        <svg width="16" height="16" viewBox="0 0 16 16"><path d=${starPath} fill="#fcb316" /><circle cx="12" cy="12" r="4" fill="#2bbf5a" /><path d="M12 9.800v4.400M9.800 12h4.400" stroke="#fff" /></svg>
        <span>收藏</span>
        ${chevron}
      </button>
      ${BOOKMARKS.map(
        (b) => html`<a class="bookmark ${b.extra ?? ""}" href="#bookmark">${b.icon}<span>${b.label}</span></a>`
      )}
    </nav>`;
  }

  private status() {
    const group = (items: Item[]) =>
      html`<div class="status-group">
        ${items.map((s) => html`<button aria-label=${s.label}>${s.icon}</button>`)}
      </div>`;
    return html`<footer class="status">
      <button class="clip">
        <svg width="15" height="15" viewBox="0 0 15 15"><circle cx="7.500" cy="7.500" r="7.500" fill="#22d254" /><path d="M5 4l6 3.500-6 3.500 1.500-3.500z" fill="#fff" /></svg>
        <span>快剪辑</span>
      </button>
      ${group(STATUS_A)}
      <button class="download">
        <svg width="14" height="14" viewBox="0 0 14 14" fill="none" stroke="#777"><path d="M7 1v12M1.500 7.500L7 13l5.500-5.500" /></svg>
        <span>下载</span>
      </button>
      ${group(STATUS_B)}
      <button class="zoom">${magnifier}<span>100%</span></button>
    </footer>`;
  }

  private taskbar() {
    return html`<div class="taskbar">
      <button class="start" aria-label="开始"><svg width="16" height="16" viewBox="0 0 16 16" fill="#fff"><path d="M0 2.300l6.500-.9v6.200H0zM7.300 1.300L16 0v7.600H7.300zM0 8.400h6.500v6.200L0 13.700zM7.300 8.400H16V16l-8.700-1.300z" /></svg></button>
      <label class="task-search">
        <svg width="17" height="17" viewBox="0 0 17 17" fill="none" stroke="#fff" stroke-width="1.200"><circle cx="10.500" cy="6" r="5.200" /><path d="M7 10L1 16" /></svg>
        <input type="text" aria-label="搜索" placeholder="在这里输入你要搜索的内容" />
      </label>
      <div class="apps">
        ${APPS.map((a) => html`<button class="app ${a.extra ?? ""}" aria-label=${a.label}>${a.icon}</button>`)}
      </div>
      <div class="lang"><span>CH</span><button class="ime">拼</button></div>
      <dl class="speed">
        <dt>Up:</dt>
        <dd>13.124 kB/s</dd>
        <dt>Down:</dt>
        <dd>43.366 kB/s</dd>
      </dl>
      <div class="cpu"><span>53℃</span><span>CPU温度</span></div>
      <div class="tray">
        ${TRAY.map((t) => html`<button aria-label=${t.label}>${t.icon}</button>`)}
      </div>
      <button class="clock"><span>10:30</span><span>2019/6/17</span></button>
      <button class="notice" aria-label="通知">
        <svg width="26" height="26" viewBox="0 0 26 26">
          <path d="M1 2h16v12h-7v4l-4-4H1z" fill="#fff" />
          <path d="M4 5.500h10M4 8.500h10M4 11.500h6" stroke="#24708f" stroke-width="1.200" />
          <circle cx="17" cy="17.500" r="7.800" fill="#2b979b" stroke="#73b9bd" />
          <text x="17" y="22" text-anchor="middle" font-size="12" font-weight="700" fill="#fff" font-family="Open Sans, sans-serif">1</text>
        </svg>
      </button>
      <button class="peek" aria-label="显示桌面"></button>
    </div>`;
  }
}
